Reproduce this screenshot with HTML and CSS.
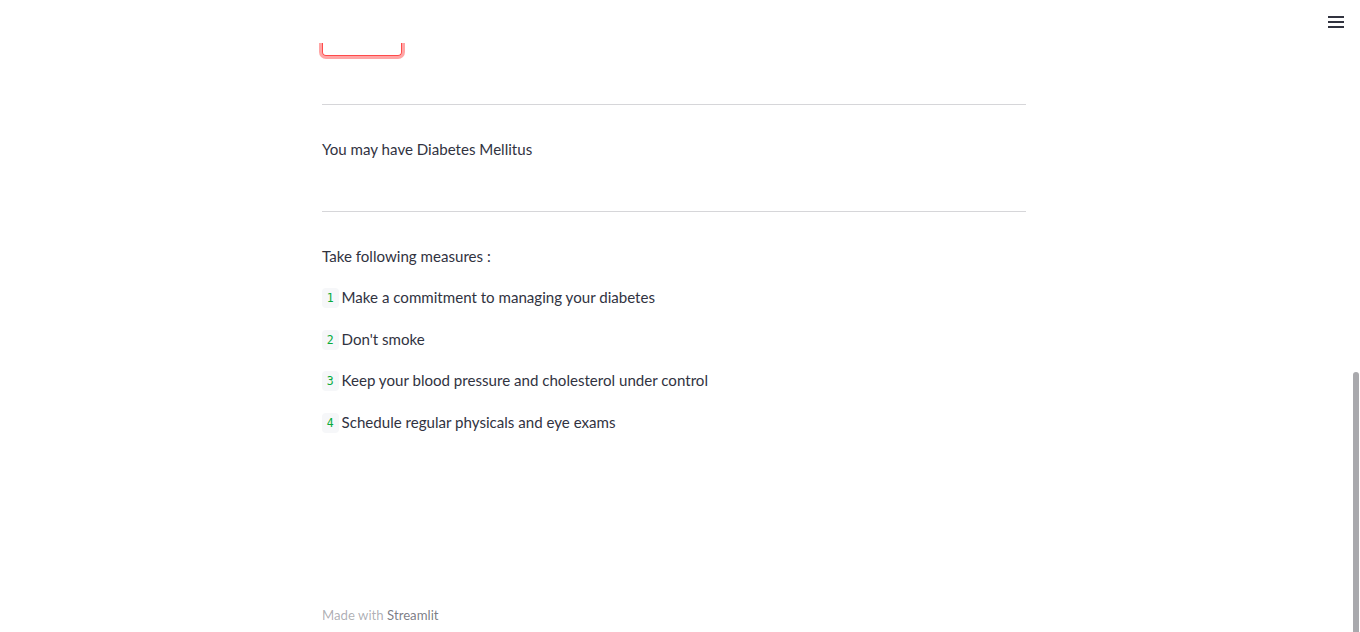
FILE: index.html
```html
<!DOCTYPE html>
<html lang="en">
<head>
<meta charset="utf-8">
<title>Diabetes Prediction</title>
<link rel="stylesheet" href="styles.css">
</head>
<body>
<div class="app">
  <div class="page">
    <header class="topbar">
      <button class="menu" aria-label="Main menu">
        <svg width="16" height="12" viewBox="0 0 16 12"><rect x="0" y="0" width="16" height="2" fill="#31333f"/><rect x="0" y="5" width="16" height="2" fill="#31333f"/><rect x="0" y="10" width="16" height="2" fill="#31333f"/></svg>
      </button>
    </header>
    <main class="content">
      <div class="btn-tail"></div>
      <hr class="rule rule-first">
      <p class="text result">You may have Diabetes Mellitus</p>
      <hr class="rule rule-second">
      <p class="text intro">Take following measures :</p>
      <ol class="measures">
        <li class="text item"><code class="num">1</code><span>Make a commitment to managing your diabetes</span></li>
        <li class="text item"><code class="num">2</code><span>Don't smoke</span></li>
        <li class="text item"><code class="num">3</code><span>Keep your blood pressure and cholesterol under control</span></li>
        <li class="text item"><code class="num">4</code><span>Schedule regular physicals and eye exams</span></li>
      </ol>
      <footer class="footer">Made with <span class="brand">Streamlit</span></footer>
    </main>
  </div>
  <div class="scrollbar"><div class="thumb"></div></div>
</div>
</body>
</html>
```
FILE: styles.css
```css
html, body {
  margin: 0;
  padding: 0;
  height: 100%;
  background: #ffffff;
  overflow: hidden;
}
body {
  font-family: "Lato", "Noto Sans", sans-serif;
  color: rgb(49, 51, 63);
}
.app {
  display: flex;
  height: 632px;
}
.page {
  flex: 1;
  display: flex;
  flex-direction: column;
  min-width: 0;
}
.topbar {
  flex-shrink: 0;
  height: 43px;
  display: flex;
  justify-content: flex-end;
  align-items: flex-start;
  padding-right: 4px;
}
.menu {
  border: 0;
  background: transparent;
  padding: 0;
  margin-top: 16px;
  width: 16px;
  height: 12px;
  display: block;
}
.menu svg { display: block; }
.content {
  width: 704px;
  margin: 0 auto;
  flex-shrink: 0;
}
.btn-tail {
  width: 78px;
  height: 12px;
  border: 1px solid rgb(255, 75, 75);
  border-top: 0;
  border-radius: 0 0 4px 4px;
  box-shadow: 0 0 0 3px rgba(255, 75, 75, 0.5);
  clip-path: inset(0 -4px -4px -4px);
}
.rule {
  border: 0;
  height: 1px;
  background: rgba(49, 51, 63, 0.2);
  margin: 0;
}
.rule-first { margin-top: 48px; }
.rule-second { margin-top: 48px; }
.text {
  font-size: 15.1px;
  line-height: 25.6px;
  margin: 0;
}
.result { margin-top: 32px; }
.intro { margin-top: 32px; }
.measures {
  list-style: none;
  margin: 16px 0 0;
  padding: 0;
  display: flex;
  flex-direction: column;
  gap: 16px;
}
.item {
  display: flex;
  align-items: center;
  height: 25.6px;
  gap: 3px;
}
.num {
  font-family: "DejaVu Sans Mono", "Liberation Mono", monospace;
  font-size: 11.5px;
  line-height: 14px;
  color: rgb(9, 171, 59);
  background: rgb(246, 247, 249);
  border-radius: 4px;
  padding: 3px 4.8px;
}
.footer {
  margin-top: 169px;
  font-size: 13.2px;
  line-height: 20px;
  color: rgba(49, 51, 63, 0.4);
}
.brand { color: rgba(49, 51, 63, 0.65); }
.scrollbar {
  width: 12px;
  padding-top: 372px;
  display: flex;
  justify-content: flex-end;
  padding-right: 1px;
  box-sizing: border-box;
  flex-shrink: 0;
}
.thumb {
  width: 6px;
  height: 260px;
  background: #a9a9ad;
  border-radius: 3px 3px 0 0;
}
```
